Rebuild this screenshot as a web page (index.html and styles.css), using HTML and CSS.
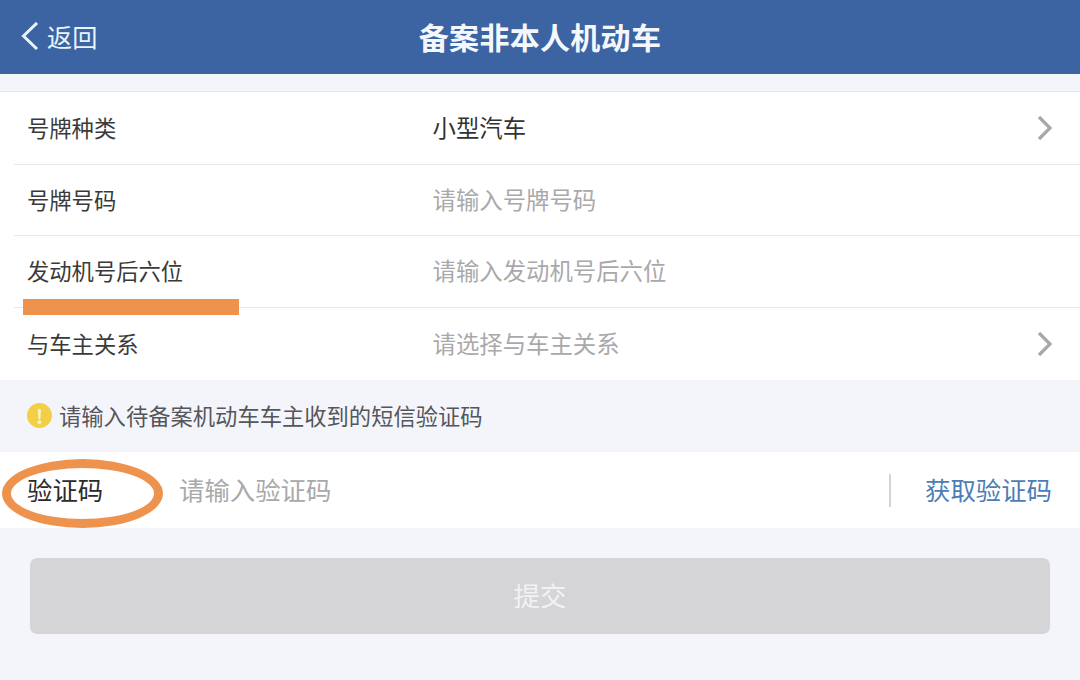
FILE: index.html
```html
<!DOCTYPE html>
<html lang="zh-CN">
<head>
<meta charset="utf-8">
<title>备案非本人机动车</title>
<link rel="stylesheet" href="styles.css">
</head>
<body>
<div class="page">
  <header class="topbar">
    <div class="back">
      <svg class="back-icon" width="20" height="30" viewBox="0 0 20 30"><path d="M17 1 L3.5 14 L17 27" fill="none" stroke="#e8f4fb" stroke-width="3"/></svg>
      <span class="back-text">返回</span>
    </div>
    <h1 class="title">备案非本人机动车</h1>
  </header>
  <section class="list">
    <div class="row row-a">
      <div class="label">号牌种类</div>
      <div class="value">小型汽车</div>
      <svg class="chev" width="16" height="26" viewBox="0 0 16 26"><path d="M2 2 L13 13 L2 24" fill="none" stroke="#a8a8a8" stroke-width="3.2"/></svg>
    </div>
    <div class="row row-b">
      <div class="label">号牌号码</div>
      <div class="value ph">请输入号牌号码</div>
    </div>
    <div class="row row-c">
      <div class="label">发动机号后六位</div>
      <div class="value ph">请输入发动机号后六位</div>
    </div>
    <div class="row row-d">
      <div class="label">与车主关系</div>
      <div class="value ph">请选择与车主关系</div>
      <svg class="chev" width="16" height="26" viewBox="0 0 16 26"><path d="M2 2 L13 13 L2 24" fill="none" stroke="#a8a8a8" stroke-width="3.2"/></svg>
    </div>
  </section>
  <div class="tip">
    <span class="tip-icon">!</span>
    <span class="tip-text">请输入待备案机动车车主收到的短信验证码</span>
  </div>
  <section class="code-row">
    <div class="code-label">验证码</div>
    <div class="code-ph">请输入验证码</div>
    <div class="code-get"><span class="code-get-text">获取验证码</span></div>
  </section>
  <div class="submit-wrap">
    <div class="submit"><span class="submit-text">提交</span></div>
  </div>
  <div class="mark-bar"></div>
  <div class="mark-ring"></div>
</div>
</body>
</html>
```
FILE: styles.css
```css
* { box-sizing: border-box; }
html, body { margin: 0; padding: 0; }
body {
  width: 1080px;
  height: 680px;
  overflow: hidden;
  background: #f4f5fa;
  font-family: "Noto Sans CJK SC", "Noto Sans", sans-serif;
}
.page { position: relative; width: 1080px; height: 680px; }
.topbar {
  position: relative;
  height: 74px;
  background: #3c64a2;
  display: flex;
  align-items: center;
  justify-content: center;
}
.back {
  position: absolute;
  left: 20px;
  top: 0;
  height: 74px;
  display: flex;
  align-items: center;
  gap: 7px;
  color: #e8f4fb;
  font-size: 25.2px;
}
.back-text { padding-bottom: 3px; }
.title {
  margin: 0;
  padding-bottom: 3px;
  font-size: 30px;
  font-weight: 700;
  color: #f4f8fc;
  letter-spacing: 0.3px;
}
.list {
  margin-top: 17px;
  background: #fff;
  border-top: 1px solid #e6e6e8;
}
.row {
  display: flex;
  align-items: center;
  margin-left: 14px;
  padding-left: 13px;
  padding-right: 27px;
  border-bottom: 1px solid #e9e9eb;
}
.row-a { height: 73px; }
.row-b { height: 71px; }
.row-c { height: 72px; }
.row-d { height: 72px; border-bottom: 0; }
.label {
  width: 405.5px;
  flex: none;
  padding-bottom: 3px;
  font-size: 22.3px;
  color: #3a3a3a;
}
.value {
  flex: 1;
  padding-bottom: 3px;
  font-size: 23.4px;
  color: #333;
}
.ph { color: #a9a9ab; }
.tip {
  height: 71px;
  padding-left: 27px;
  display: flex;
  align-items: center;
  gap: 8px;
  font-size: 22.3px;
  color: #55565a;
}
.tip-text { padding-bottom: 2px; margin-left: -1px; }
.tip-icon {
  width: 25px;
  height: 25px;
  border-radius: 50%;
  background: #f3cf45;
  color: #fbf3d0;
  font-size: 19px;
  font-weight: 700;
  line-height: 25px;
  text-align: center;
}
.code-row {
  height: 76px;
  margin-top: 1px;
  background: #fff;
  display: flex;
  align-items: center;
  padding: 0 28px 0 27px;
  font-size: 25.4px;
}
.code-label { width: 152px; flex: none; padding-bottom: 3px; color: #2b2b2b; }
.code-ph { flex: 1; padding-bottom: 3px; color: #a9a9ab; }
.code-get {
  height: 33px;
  padding-left: 34px;
  border-left: 2px solid #d4d4d6;
  color: #4d7db5;
  display: flex;
  align-items: center;
}
.code-get-text { padding-bottom: 3px; }
.submit-wrap { padding: 30px 30px 0; }
.submit {
  height: 76px;
  border-radius: 7px;
  background: #d5d5d7;
  color: #f2f2f3;
  font-size: 26.5px;
  display: flex;
  align-items: center;
  justify-content: center;
}
.submit-text { padding-bottom: 3px; }
.mark-bar {
  position: absolute;
  left: 23px;
  top: 299px;
  width: 216px;
  height: 16px;
  background: #ee934e;
}
.mark-ring {
  position: absolute;
  left: 2px;
  top: 459px;
  width: 161px;
  height: 69px;
  border: 9px solid #ee934e;
  border-radius: 50%;
}
```
